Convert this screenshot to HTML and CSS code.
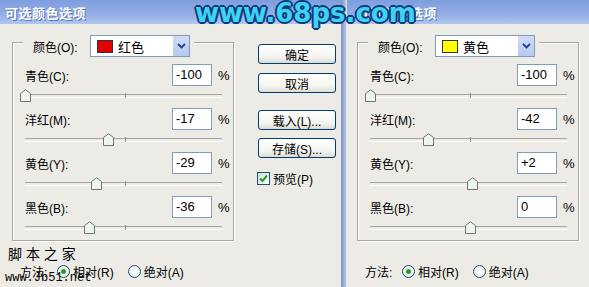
FILE: index.html
```html
<!DOCTYPE html>
<html lang="zh">
<head>
<meta charset="utf-8">
<title>可选颜色选项</title>
<link rel="stylesheet" href="styles.css">
</head>
<body>
<div class="screen">
  <section class="dlg dlg-left">
    <div class="titlebar"><span class="title">可选颜色选项</span></div>
    <div class="dlg-body">
      <div class="main-col">
        <div class="group">
          <div class="group-head">
            <span class="head-label">颜色(O):</span>
            <div class="select">
              <span class="swatch swatch-red"></span>
              <span class="select-text">红色</span>
              <span class="select-btn"><svg width="9" height="6" viewBox="0 0 9 6"><path d="M1 1 L4.5 4.5 L8 1" fill="none" stroke="#1f3f8a" stroke-width="1.8"/></svg></span>
            </div>
          </div>
          <div class="row">
            <div class="row-top"><span class="lbl">青色(C):</span><span class="num">-100</span><span class="pct">%</span></div>
            <div class="slider"><span class="tick"></span><span class="thumb" style="left:-5px"><svg width="11" height="13" viewBox="0 0 11 13"><path d="M0.5 12.5 V4.5 L5.5 0.8 L10.5 4.5 V12.5 Z" fill="#eef6ec" stroke="#6d7a6b"/></svg></span></div>
          </div>
          <div class="row">
            <div class="row-top"><span class="lbl">洋红(M):</span><span class="num">-17</span><span class="pct">%</span></div>
            <div class="slider"><span class="tick"></span><span class="thumb" style="left:78px"><svg width="11" height="13" viewBox="0 0 11 13"><path d="M0.5 12.5 V4.5 L5.5 0.8 L10.5 4.5 V12.5 Z" fill="#eef6ec" stroke="#6d7a6b"/></svg></span></div>
          </div>
          <div class="row">
            <div class="row-top"><span class="lbl">黄色(Y):</span><span class="num">-29</span><span class="pct">%</span></div>
            <div class="slider"><span class="tick"></span><span class="thumb" style="left:66px"><svg width="11" height="13" viewBox="0 0 11 13"><path d="M0.5 12.5 V4.5 L5.5 0.8 L10.5 4.5 V12.5 Z" fill="#eef6ec" stroke="#6d7a6b"/></svg></span></div>
          </div>
          <div class="row">
            <div class="row-top"><span class="lbl">黑色(B):</span><span class="num">-36</span><span class="pct">%</span></div>
            <div class="slider"><span class="tick"></span><span class="thumb" style="left:59px"><svg width="11" height="13" viewBox="0 0 11 13"><path d="M0.5 12.5 V4.5 L5.5 0.8 L10.5 4.5 V12.5 Z" fill="#eef6ec" stroke="#6d7a6b"/></svg></span></div>
          </div>
        </div>
        <div class="method">
          <span class="method-label">方法:</span>
          <span class="radio on"></span><span class="radio-text">相对(R)</span>
          <span class="radio"></span><span class="radio-text">绝对(A)</span>
        </div>
      </div>
      <div class="btn-col">
        <div class="btn">确定</div>
        <div class="btn btn-2">取消</div>
        <div class="btn btn-3">载入(L)...</div>
        <div class="btn btn-4">存储(S)...</div>
        <div class="check-row">
          <span class="checkbox"><svg width="11" height="11" viewBox="0 0 11 11"><path d="M2 5.5 L4.5 8 L9 2.5" fill="none" stroke="#21a121" stroke-width="2"/></svg></span>
          <span class="check-text">预览(P)</span>
        </div>
      </div>
    </div>
    <div class="wm-jb">
      <div class="wm-jb-cn">脚 本 之 家</div>
      <div class="wm-jb-url">www.Jb51.net</div>
    </div>
  </section>

  <div class="divider"></div>

  <section class="dlg dlg-right">
    <div class="titlebar titlebar-r"><span class="title">可选颜色选项</span></div>
    <div class="dlg-body">
      <div class="main-col main-col-r">
        <div class="group">
          <div class="group-head">
            <span class="head-label">颜色(O):</span>
            <div class="select">
              <span class="swatch swatch-yellow"></span>
              <span class="select-text">黄色</span>
              <span class="select-btn"><svg width="9" height="6" viewBox="0 0 9 6"><path d="M1 1 L4.5 4.5 L8 1" fill="none" stroke="#1f3f8a" stroke-width="1.8"/></svg></span>
            </div>
          </div>
          <div class="row">
            <div class="row-top"><span class="lbl">青色(C):</span><span class="num">-100</span><span class="pct">%</span></div>
            <div class="slider"><span class="tick"></span><span class="thumb" style="left:-5px"><svg width="11" height="13" viewBox="0 0 11 13"><path d="M0.5 12.5 V4.5 L5.5 0.8 L10.5 4.5 V12.5 Z" fill="#eef6ec" stroke="#6d7a6b"/></svg></span></div>
          </div>
          <div class="row">
            <div class="row-top"><span class="lbl">洋红(M):</span><span class="num">-42</span><span class="pct">%</span></div>
            <div class="slider"><span class="tick"></span><span class="thumb" style="left:53px"><svg width="11" height="13" viewBox="0 0 11 13"><path d="M0.5 12.5 V4.5 L5.5 0.8 L10.5 4.5 V12.5 Z" fill="#eef6ec" stroke="#6d7a6b"/></svg></span></div>
          </div>
          <div class="row">
            <div class="row-top"><span class="lbl">黄色(Y):</span><span class="num">+2</span><span class="pct">%</span></div>
            <div class="slider"><span class="tick"></span><span class="thumb" style="left:97px"><svg width="11" height="13" viewBox="0 0 11 13"><path d="M0.5 12.5 V4.5 L5.5 0.8 L10.5 4.5 V12.5 Z" fill="#eef6ec" stroke="#6d7a6b"/></svg></span></div>
          </div>
          <div class="row">
            <div class="row-top"><span class="lbl">黑色(B):</span><span class="num">0</span><span class="pct">%</span></div>
            <div class="slider"><span class="tick"></span><span class="thumb" style="left:95px"><svg width="11" height="13" viewBox="0 0 11 13"><path d="M0.5 12.5 V4.5 L5.5 0.8 L10.5 4.5 V12.5 Z" fill="#eef6ec" stroke="#6d7a6b"/></svg></span></div>
          </div>
        </div>
        <div class="method method-r">
          <span class="method-label">方法:</span>
          <span class="radio on"></span><span class="radio-text">相对(R)</span>
          <span class="radio"></span><span class="radio-text">绝对(A)</span>
        </div>
      </div>
    </div>
  </section>

  <div class="wm-68">www.68ps.com</div>
</div>
</body>
</html>
```

FILE: styles.css
```css
* { box-sizing: border-box; }

html, body {
  margin: 0;
  padding: 0;
}

body {
  width: 589px;
  height: 287px;
  overflow: hidden;
  background: #ecebe5;
  font-family: "Liberation Sans", "Noto Sans CJK SC", sans-serif;
  font-size: 12px;
  color: #000;
}

.screen {
  position: relative;
  display: flex;
  width: 589px;
  height: 287px;
}

.dlg {
  position: relative;
  display: flex;
  flex-direction: column;
  background: #ecebe5;
}

.dlg-left { width: 341px; }
.dlg-right { flex: 1; }

.divider {
  width: 6px;
  background: linear-gradient(90deg, #7d8fbf 0, #9aaad6 50%, #b8c5e6 100%);
  border-right: 1px solid #dfe4f1;
}

.titlebar {
  height: 24px;
  display: flex;
  align-items: center;
  padding-left: 5px;
  background: linear-gradient(180deg, #7f9edf 0%, #93aee6 60%, #b3c6ee 100%);
}

.titlebar-r { padding-left: 9px; }

.title {
  color: #fff;
  font-weight: bold;
  font-size: 13px;
  letter-spacing: 0.5px;
  text-shadow: 1px 1px 0 #5a76b8;
}

.dlg-body {
  display: flex;
  flex: 1;
}

.main-col {
  display: flex;
  flex-direction: column;
  padding-left: 12px;
  padding-top: 18px;
}

.main-col-r { padding-left: 10px; }

.group {
  width: 222px;
  height: 199px;
  border: 1px solid #a9a89f;
  box-shadow: inset 1px 1px 0 #fff, 1px 1px 0 #fff;
}

.group-head {
  display: flex;
  width: fit-content;
  align-items: center;
  margin-top: -8px;
  margin-left: 10px;
  padding: 0 4px 0 10px;
  background: #ecebe5;
  height: 22px;
}

.head-label {
  width: 57px;
}

.select {
  width: 100px;
  height: 22px;
  border: 1px solid #7f9db9;
  background: #fff;
  display: flex;
  align-items: center;
  padding-left: 6px;
}

.swatch {
  width: 16px;
  height: 13px;
  border: 1px solid #333;
}

.swatch-red { background: #e00000; }
.swatch-yellow { background: #ffff00; }

.select-text {
  margin-left: 5px;
  flex: 1;
  font-size: 13px;
}

.select-btn {
  width: 17px;
  height: 20px;
  background: linear-gradient(180deg, #cfdcf8, #b6c9f1);
  border-left: 1px solid #fff;
  display: flex;
  align-items: center;
  justify-content: center;
}

.row {
  height: 44px;
}

.group-head + .row {
  margin-top: 7px;
}

.row-top {
  display: grid;
  grid-template-columns: 147px 40px 21px;
  align-items: center;
  padding-left: 12px;
  height: 22px;
}

.lbl {
  font-size: 12px;
}

.num {
  height: 22px;
  border: 1px solid #7f9db9;
  background: #fff;
  padding-left: 3px;
  line-height: 20px;
  font-size: 13px;
}

.pct {
  padding-left: 6px;
  font-size: 13px;
}

.slider {
  position: relative;
  margin-left: 12px;
  width: 197px;
  height: 16px;
  margin-top: 2px;
}

.slider::before {
  content: "";
  position: absolute;
  left: 0;
  right: 0;
  top: 6px;
  height: 2px;
  border-top: 1px solid #a7a69e;
  border-bottom: 1px solid #fff;
}

.tick {
  position: absolute;
  left: 100px;
  top: 5px;
  width: 1px;
  height: 5px;
  background: #8d8c86;
}

.thumb {
  position: absolute;
  top: 1px;
  width: 11px;
  height: 13px;
  display: block;
}

.thumb svg { display: block; }

.method {
  display: flex;
  align-items: center;
  margin-top: 22px;
  margin-left: 8px;
  height: 16px;
}

.method-r { margin-left: 8px; }

.method-label {
  width: 37px;
}

.radio {
  width: 13px;
  height: 13px;
  border-radius: 50%;
  border: 1px solid #1c5180;
  background: radial-gradient(circle, #fff 0, #e6e5df 100%);
  position: relative;
  margin-right: 3px;
}

.radio.on::after {
  content: "";
  position: absolute;
  left: 3px;
  top: 3px;
  width: 5px;
  height: 5px;
  border-radius: 50%;
  background: #21a121;
}

.radio-text {
  margin-right: 14px;
}

.btn-col {
  display: flex;
  flex-direction: column;
  margin-left: 24px;
  padding-top: 20px;
}

.btn {
  width: 78px;
  height: 20px;
  border: 1px solid #003c74;
  border-radius: 3px;
  background: linear-gradient(180deg, #fff 0%, #f3f3ee 70%, #dcdbd3 100%);
  display: flex;
  align-items: center;
  justify-content: center;
  font-size: 12px;
}

.btn-2 { margin-top: 9px; }
.btn-3 { margin-top: 17px; }
.btn-4 { margin-top: 8px; }

.check-row {
  display: flex;
  align-items: center;
  margin-top: 12px;
  margin-left: -1px;
}

.checkbox {
  width: 13px;
  height: 13px;
  border: 1px solid #1c5180;
  background: linear-gradient(135deg, #dcdbd4, #fff);
  display: flex;
  align-items: center;
  justify-content: center;
  margin-right: 3px;
}

.check-text {
  font-size: 12px;
}

.wm-jb {
  position: absolute;
  left: 5px;
  top: 246px;
}

.wm-jb-cn {
  font-size: 14px;
  line-height: 16px;
  margin-left: 3px;
}

.wm-jb-url {
  font-family: "Liberation Mono", monospace;
  font-size: 12px;
  line-height: 14px;
  margin-top: 9px;
}

.wm-68 {
  position: absolute;
  left: 195px;
  top: 0;
  font-family: "DejaVu Sans", sans-serif;
  font-weight: bold;
  font-size: 26px;
  line-height: 26px;
  color: #3fd2f4;
  text-shadow:
    2px 0 0 #0b3a7a, -2px 0 0 #0b3a7a, 0 2px 0 #0b3a7a, 0 -2px 0 #0b3a7a,
    1px 1px 0 #0b3a7a, -1px -1px 0 #0b3a7a, 1px -1px 0 #0b3a7a, -1px 1px 0 #0b3a7a;
}
```
